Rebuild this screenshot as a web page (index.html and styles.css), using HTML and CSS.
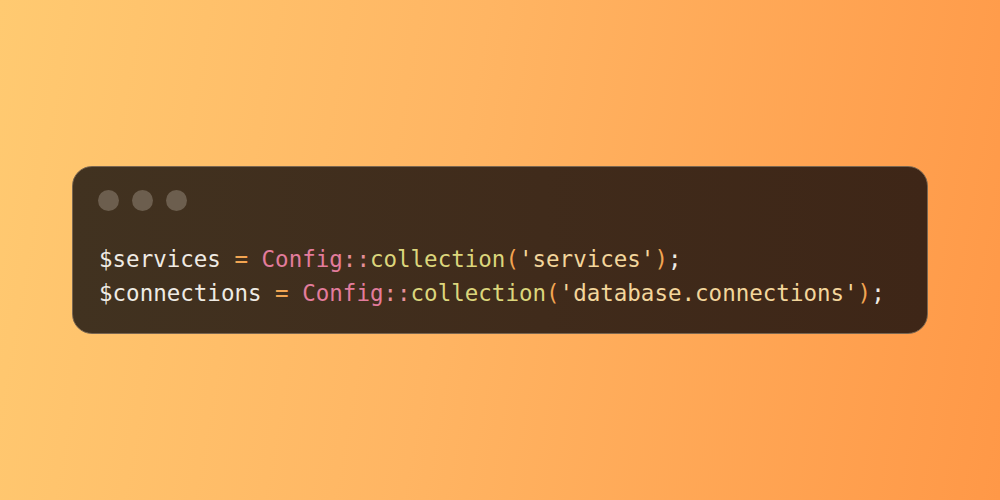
FILE: index.html
```html
<!DOCTYPE html>
<html lang="en">
<head>
<meta charset="utf-8">
<title>Code snippet</title>
<link rel="stylesheet" href="styles.css">
</head>
<body>
<main class="stage">
  <section class="window">
    <div class="controls">
      <span class="dot"></span>
      <span class="dot"></span>
      <span class="dot"></span>
    </div>
    <pre class="code"><code><span class="var">$services</span> <span class="op">=</span> <span class="cls">Config</span><span class="sep">::</span><span class="fn">collection</span><span class="paren">(</span><span class="str">'services'</span><span class="paren">)</span><span class="var">;</span>
<span class="var">$connections</span> <span class="op">=</span> <span class="cls">Config</span><span class="sep">::</span><span class="fn">collection</span><span class="paren">(</span><span class="str">'database.connections'</span><span class="paren">)</span><span class="var">;</span></code></pre>
  </section>
</main>
</body>
</html>
```
FILE: styles.css
```css
html, body {
  margin: 0;
  padding: 0;
}

body {
  width: 1000px;
  height: 500px;
  background: linear-gradient(100deg, #ffca71 0%, #ffb563 45%, #ff9847 100%);
  font-family: "DejaVu Sans Mono", "Liberation Mono", monospace;
}

.stage {
  height: 500px;
  display: flex;
  align-items: center;
  justify-content: center;
}

.window {
  box-sizing: border-box;
  width: 856px;
  height: 168px;
  padding: 23px 25px 22px 25px;
  border: 1.5px solid #7a6650;
  border-radius: 20px;
  background: linear-gradient(90deg, #413220 0%, #402b1b 55%, #3e2617 100%);
  display: flex;
  flex-direction: column;
}

.controls {
  display: flex;
  gap: 13px;
}

.dot {
  width: 21px;
  height: 21px;
  border-radius: 50%;
  background: #6c5e4e;
}

.code {
  margin: 31px 0 0 1px;
  font-family: "DejaVu Sans Mono", "Liberation Mono", monospace;
  font-size: 22.5px;
  line-height: 34px;
  color: #eeeae3;
}

.var { color: #efebe4; }
.op { color: #f2a552; }
.cls { color: #e37c9c; }
.sep { color: #e6909a; }
.fn { color: #dcd67c; }
.paren { color: #f2a552; }
.str { color: #f3d69c; }
```
